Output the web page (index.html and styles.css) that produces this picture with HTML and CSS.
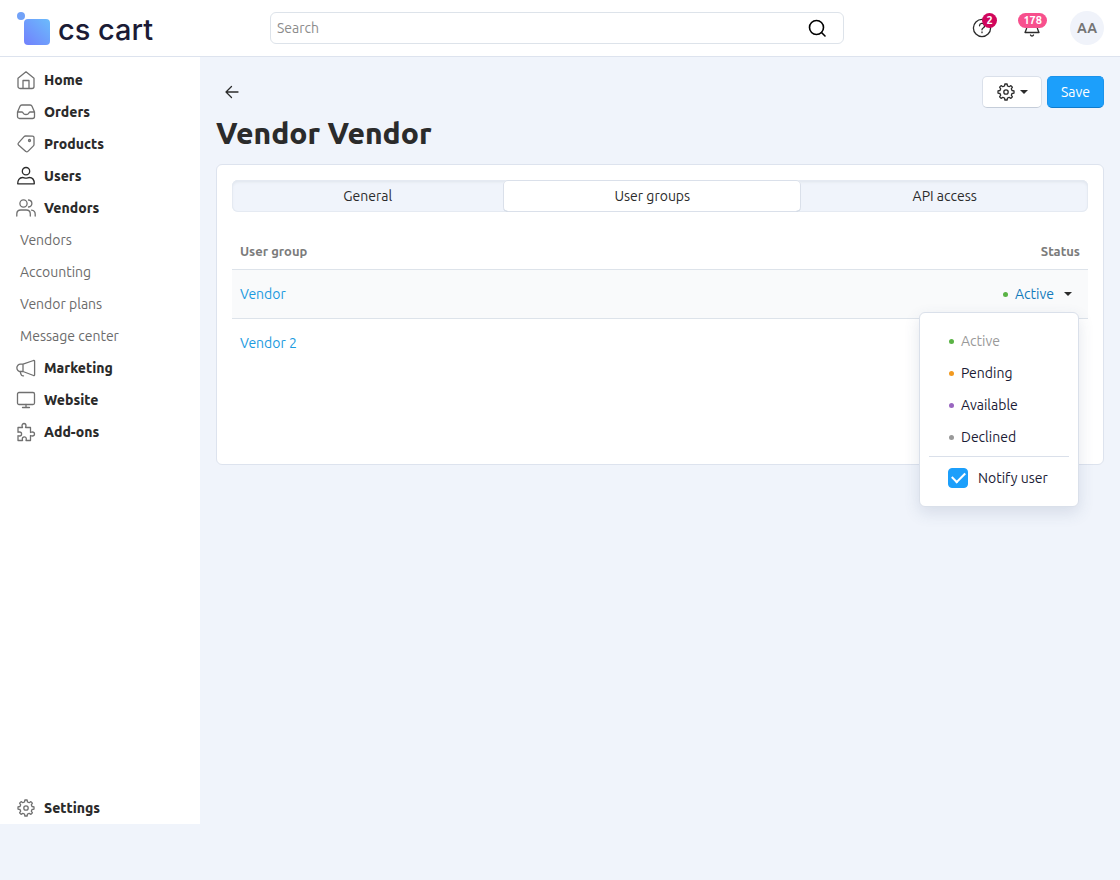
FILE: index.html
```html
<!DOCTYPE html>
<html lang="en">
<head>
  <meta charset="UTF-8" />
  <meta name="viewport" content="width=device-width, initial-scale=1" />
  <title>Vendor Vendor - User groups</title>
  <link rel="stylesheet" href="styles.css">
</head>
<body>

  <svg class="sprite" aria-hidden="true">
    <symbol id="icon-gear" viewBox="0 0 20 20">
      <path d="M8.500 4 8.900 2h2.200l.4 2 1.700.7 1.700-1.100 1.500 1.500-1.100 1.700.7 1.700 2 .4v2.200l-2 .4-.7 1.700 1.100 1.700-1.500 1.500-1.700-1.100-1.700.7-.4 2H8.900l-.4-2-1.700-.7-1.700 1.100-1.500-1.500 1.100-1.700L4 11.500l-2-.4V8.900l2-.4.7-1.700L3.600 5.100 5.100 3.600l1.700 1.100z" />
      <circle cx="10" cy="10" r="2.200" />
    </symbol>
  </svg>

  <header class="header">
    <a class="logo" href="#" aria-label="cs cart">
      <svg class="logo-mark" viewBox="0 0 34 34" aria-hidden="true">
        <defs>
          <linearGradient id="logo-fill" x1="0" y1="1" x2="1" y2="0">
            <stop offset="0" stop-color="#7280fc" />
            <stop offset="1" stop-color="#6bbcfc" />
          </linearGradient>
        </defs>
        <circle cx="5" cy="4" r="4" fill="#72a2f8" />
        <rect x="8" y="7" width="26" height="26" rx="4" fill="url(#logo-fill)" />
      </svg>
      <span class="logo-text">cs cart</span>
    </a>

    <form class="search">
      <input class="search-input" type="search" placeholder="Search" aria-label="Search">
      <button class="search-button" type="submit" aria-label="Find">
        <svg viewBox="0 0 20 20"><circle cx="9.500" cy="9.500" r="7" /><path d="m14.500 14.500 3.500 3.500" /></svg>
      </button>
    </form>

    <div class="header-tools">
      <button class="tool" type="button" aria-label="Help">
        <svg viewBox="0 0 20 20"><circle cx="10" cy="10" r="8.600" /><path d="M7.500 7.800a2.500 2.500 0 1 1 3.700 2.200c-.8.500-1.200.900-1.200 1.800M10 14v.7" /></svg>
        <span class="badge badge-help">2</span>
      </button>
      <button class="tool" type="button" aria-label="Notifications">
        <svg viewBox="0 0 20 20"><path d="M10 2C6.500 2 5 4.500 5 7.500 5 11 4 12 3 14.500h14C16 12 15 11 15 7.500 15 4.500 13.500 2 10 2zM8.500 17c.5 1.300 2.500 1.300 3 0" /></svg>
        <span class="badge badge-bell">178</span>
      </button>
      <button class="avatar" type="button">AA</button>
    </div>
  </header>

  <div class="layout">
    <nav class="sidebar">
      <ul class="menu">
        <li><a class="menu-link" href="#">
          <svg viewBox="0 0 20 20"><path d="M2 8.200 10 1.800l8 6.400v8.300a2 2 0 0 1-2 2H4a2 2 0 0 1-2-2zM7 18.500v-8h6v8" /></svg>
          Home</a></li>
        <li><a class="menu-link" href="#">
          <svg viewBox="0 0 20 20"><path d="M1.500 10 4 4.200A2 2 0 0 1 5.800 3h8.400A2 2 0 0 1 16 4.200l2.500 5.800v4.500a2 2 0 0 1-2 2h-13a2 2 0 0 1-2-2zM1.500 10H6c.8 0 1 .5 1.300 1.200.4.900 1 1.300 2.700 1.300s2.300-.4 2.700-1.300c.3-.7.5-1.200 1.300-1.200h4.500" /></svg>
          Orders</a></li>
        <li><a class="menu-link" href="#">
          <svg viewBox="0 0 20 20"><path d="m9.500 2 7 .1a1.500 1.500 0 0 1 1.500 1.500v6.900a2 2 0 0 1-.6 1.400l-5.500 5.500a1.500 1.500 0 0 1-2.100 0L2.500 11a1.500 1.500 0 0 1 0-2.100l5.600-6.300A2 2 0 0 1 9.500 2z" /><circle cx="13.500" cy="6.500" r="1" /></svg>
          Products</a></li>
        <li><a class="menu-link menu-link-dark" href="#">
          <svg viewBox="0 0 20 20"><circle cx="10" cy="5.200" r="3.700" /><path d="M1.700 17.800c0-3.500 1.500-6.300 5-6.300 1.300 0 1.800.7 3.300.7s2-.7 3.300-.7c3.500 0 5 2.800 5 6.300z" /></svg>
          Users</a></li>
        <li>
          <a class="menu-link" href="#">
            <svg viewBox="0 0 20 20"><circle cx="7.500" cy="5.500" r="3.600" /><path d="M.8 18v-2c0-2.500 1.700-4 4-4h5.500c2.300 0 4 1.500 4 4v2M12.500 2c4.500.6 4.500 6.400 0 7M15.500 12.200c2.300.3 3.700 1.800 3.700 4V18" /></svg>
            Vendors</a>
          <ul class="submenu">
            <li><a class="submenu-link" href="#">Vendors</a></li>
            <li><a class="submenu-link" href="#">Accounting</a></li>
            <li><a class="submenu-link" href="#">Vendor plans</a></li>
            <li><a class="submenu-link" href="#">Message center</a></li>
          </ul>
        </li>
        <li><a class="menu-link" href="#">
          <svg viewBox="0 0 20 20"><path d="M7 6.200 17.500 2.500q1.100-.3 1.100.8v13.400q0 1.100-1.100.8L7 13.500H4.500a3.600 3.600 0 0 1 0-7.300zM7 6.200v7.300M4 13.600l1.200 3.200c.3.800 1 1.200 2.300 1" /></svg>
          Marketing</a></li>
        <li><a class="menu-link" href="#">
          <svg viewBox="0 0 20 20"><rect x="1.500" y="2.500" width="17" height="12" rx="1.500" /><path d="M10 14.500v3M6.500 17.500h7" /></svg>
          Website</a></li>
        <li><a class="menu-link" href="#">
          <svg viewBox="0 0 20 20"><path d="M2 5.500h4.500c-.2-.7-.5-1-.5-1.700C6 2.500 6.800 1.500 8 1.500s2 1 2 2.300c0 .7-.3 1-.5 1.700h5v5c.7-.2 1-.5 1.700-.5 1.300 0 2.300.8 2.300 2s-1 2-2.300 2c-.7 0-1-.3-1.700-.5v5H10c.2-.7.300-1 .3-1.500 0-1.300-.8-2.200-2-2.200s-2 .9-2 2.200c0 .5.100.8.300 1.500H2v-4.800c.7.200 1 .3 1.500.3 1.200 0 2.100-.8 2.100-2s-.9-2-2.100-2c-.5 0-.8.100-1.500.3z" /></svg>
          Add-ons</a></li>
      </ul>
      <ul class="menu">
        <li><a class="menu-link" href="#">
          <svg><use href="#icon-gear" /></svg>
          Settings</a></li>
      </ul>
    </nav>

    <main class="content">
      <div class="toolbar">
        <a class="back" href="#" aria-label="Back">
          <svg viewBox="0 0 20 20"><path d="M16 10H4M9.500 4.500 4 10l5.500 5.500" /></svg>
        </a>
        <div class="actions">
          <button class="btn" type="button" aria-label="Tools">
            <svg><use href="#icon-gear" /></svg>
            <span class="caret"></span>
          </button>
          <button class="btn btn-primary" type="button">Save</button>
        </div>
      </div>
      <h1 class="title">Vendor Vendor</h1>

      <section class="card">
        <div class="tabs" role="tablist">
          <button class="tab" type="button" role="tab">General</button>
          <button class="tab tab-active" type="button" role="tab" aria-selected="true">User groups</button>
          <button class="tab" type="button" role="tab">API access</button>
        </div>

        <table class="groups">
          <thead>
            <tr><th>User group</th><th class="col-status">Status</th></tr>
          </thead>
          <tbody>
            <tr class="row-open">
              <td><a href="#">Vendor</a></td>
              <td class="col-status">
                <div class="dropdown">
                  <button class="status-toggle" type="button" aria-expanded="true">
                    <span class="dot dot-active"></span>Active<span class="caret"></span>
                  </button>
                  <div class="dropdown-menu">
                    <button class="dropdown-item" type="button" disabled><span class="dot dot-active"></span>Active</button>
                    <button class="dropdown-item" type="button"><span class="dot dot-pending"></span>Pending</button>
                    <button class="dropdown-item" type="button"><span class="dot dot-available"></span>Available</button>
                    <button class="dropdown-item" type="button"><span class="dot dot-declined"></span>Declined</button>
                    <hr class="divider">
                    <div class="notify">
                      <input class="checkbox" type="checkbox" id="notify_user" checked>
                      <label for="notify_user">Notify user</label>
                    </div>
                  </div>
                </div>
              </td>
            </tr>
            <tr>
              <td><a href="#">Vendor 2</a></td>
              <td class="col-status"></td>
            </tr>
          </tbody>
        </table>
      </section>
    </main>
  </div>

</body>
</html>
```
FILE: styles.css
```css
* {
  box-sizing: border-box;
}

body {
  margin: 0;
  background: #f0f4fb;
  color: #2b2b2b;
  font-family: Ubuntu, "Noto Sans", sans-serif;
  font-size: 14px;
  line-height: 20px;
}

a {
  color: #1c9be0;
  text-decoration: none;
}

button,
input {
  font: inherit;
  color: inherit;
}

button {
  padding: 0;
  border: 0;
  background: none;
  cursor: pointer;
}

ul {
  margin: 0;
  padding: 0;
  list-style: none;
}

svg {
  width: 20px;
  height: 20px;
  flex: none;
  fill: none;
  stroke: currentColor;
  stroke-width: 1.3;
  stroke-linecap: round;
  stroke-linejoin: round;
}

.sprite {
  display: none;
}

/* header */
.header {
  display: flex;
  align-items: center;
  height: 57px;
  padding: 0 16px;
  background: #fff;
  border-bottom: 1px solid #dde3ee;
}

.logo {
  display: flex;
  align-items: center;
  gap: 8px;
  width: 254px;
  padding-top: 2px;
  color: #1b1b35;
}

.logo-mark {
  width: 34px;
  height: 34px;
  stroke: none;
}

.logo-text {
  padding-top: 2px;
  font-family: Inter, sans-serif;
  font-size: 29px;
  font-weight: 500;
  line-height: 32px;
}

.search {
  display: flex;
  align-items: center;
  width: 574px;
  height: 32px;
  border: 1px solid #dde3ea;
  border-radius: 6px;
}

.search-input {
  flex: 1;
  min-width: 0;
  padding: 0 6px;
  border: 0;
  outline: 0;
  background: none;
}

.search-input::placeholder {
  color: #8c8c8c;
}

.search-button {
  display: flex;
  padding: 0 16px;
  color: #000;
}

.search-button svg {
  stroke-width: 1.6;
}

.header-tools {
  display: flex;
  align-items: center;
  gap: 30px;
  margin-left: auto;
}

.tool {
  position: relative;
  display: flex;
}

.badge {
  position: absolute;
  bottom: 10px;
  height: 15px;
  padding: 0 5px;
  border-radius: 8px;
  color: #fff;
  font-size: 11px;
  font-weight: bold;
  line-height: 15px;
}

.badge-help {
  left: 10px;
  min-width: 15px;
  padding: 0 4px;
  background: #d0065c;
}

.badge-bell {
  right: -5px;
  background: #f7508d;
}

.avatar {
  width: 34px;
  height: 34px;
  border-radius: 50%;
  background: #f0f3fa;
  color: #757575;
  font-weight: bold;
}

.header-tools .avatar {
  margin-left: -2px;
}

/* sidebar */
.layout {
  display: flex;
  align-items: flex-start;
}

.sidebar {
  display: flex;
  flex-direction: column;
  justify-content: space-between;
  flex: none;
  width: 200px;
  min-height: calc(100vh - 113px);
  padding-top: 7px;
  background: #fff;
}

.menu-link {
  display: flex;
  align-items: center;
  gap: 8px;
  height: 32px;
  padding: 0 16px;
  color: #2b2b2b;
  font-weight: 800;
}

.menu-link svg {
  color: #707070;
}

.menu-link-dark svg {
  color: #2b2b2b;
}

.submenu-link {
  display: block;
  padding: 6px 20px;
  color: #6b6b6b;
}

/* page */
.content {
  flex: 1;
  min-width: 0;
  padding: 19px 16px;
}

.toolbar,
.actions {
  display: flex;
  align-items: center;
}

.toolbar {
  justify-content: space-between;
}

.actions {
  gap: 5px;
}

.back {
  display: flex;
  padding: 6px;
  color: #2b2b2b;
}

.btn {
  display: flex;
  align-items: center;
  gap: 4px;
  height: 32px;
  padding: 0 13px;
  border: 1px solid #dae0ea;
  border-bottom-color: #c5cdd9;
  border-radius: 5px;
  background: #fff;
}

.btn-primary {
  border-color: #1a93ec;
  border-bottom-color: #0f7bcc;
  background: #1c9ffb;
  color: #fff;
}

.caret {
  border: 4px solid transparent;
  border-top-color: currentColor;
  border-bottom: 0;
}

.title {
  margin: 6px 0 11px;
  font-size: 30px;
  font-weight: 800;
  line-height: 39px;
}

.card {
  min-height: 301px;
  padding: 15px;
  border: 1px solid #dde3ee;
  border-radius: 6px;
  background: #fff;
}

.tabs {
  display: flex;
  height: 32px;
  border-radius: 6px;
  background: #f0f4fb;
  box-shadow: inset 0 0 0 1px #e5eaf2, inset 0 2px 3px #dfe5ec;
}

.tab {
  flex: 1 1 auto;
  border-radius: 5px;
}

.tab-active {
  background: #fff;
  box-shadow: inset 0 0 0 1px #dae0ea, inset 0 -2px 0 -1px #b9c5d4;
}

.groups {
  width: 100%;
  margin-top: 21px;
  border-collapse: collapse;
}

.groups th,
.groups td {
  padding: 0 8px;
  text-align: left;
}

.groups th {
  height: 36px;
  color: #7b7b7b;
  font-size: 13px;
}

.groups td {
  height: 49px;
}

.groups .col-status {
  text-align: right;
}

.row-open {
  border: solid #dde3ea;
  border-width: 1px 0;
  background: #f9fafb;
}

/* status dropdown */
.dropdown {
  position: relative;
  display: inline-block;
  padding-right: 8px;
  vertical-align: middle;
}

.status-toggle {
  display: flex;
  align-items: center;
  color: #127abb;
}

.status-toggle .caret {
  margin-left: 10px;
  color: #2b2b2b;
}

.dot {
  width: 5px;
  height: 5px;
  margin-right: 7px;
  border-radius: 50%;
}

.dot-active { background: #5ab345; }
.dot-pending { background: #f29a20; }
.dot-available { background: #9966c0; }
.dot-declined { background: #999; }

.dropdown-menu {
  position: absolute;
  top: 28px;
  right: 1px;
  z-index: 10;
  width: 160px;
  padding: 12px 9px;
  border: 1px solid #dae0ea;
  border-radius: 6px;
  background: #fff;
  color: #1b1b35;
  box-shadow: 0 6px 16px rgba(60, 80, 120, 0.14);
}

.dropdown-item {
  display: flex;
  align-items: center;
  width: 100%;
  height: 32px;
  padding: 0 20px;
}

.dropdown-item:disabled {
  color: #999;
}

.divider {
  height: 1px;
  margin: 3px 0 11px;
  border: 0;
  background: #dae0ea;
}

.notify {
  display: flex;
  gap: 10px;
  padding: 0 0 6px 19px;
  white-space: nowrap;
}

.checkbox {
  appearance: none;
  flex: none;
  display: grid;
  place-items: center;
  width: 20px;
  height: 20px;
  margin: 0;
  border: 1px solid #dae0ea;
  border-radius: 4px;
}

.checkbox:checked {
  border-color: #1c9ffb;
  background: #1c9ffb;
}

.checkbox:checked::before {
  content: "";
  width: 11px;
  height: 6px;
  margin-bottom: 4px;
  border: solid #fff;
  border-width: 0 0 2px 2px;
  transform: rotate(-45deg);
}
```
